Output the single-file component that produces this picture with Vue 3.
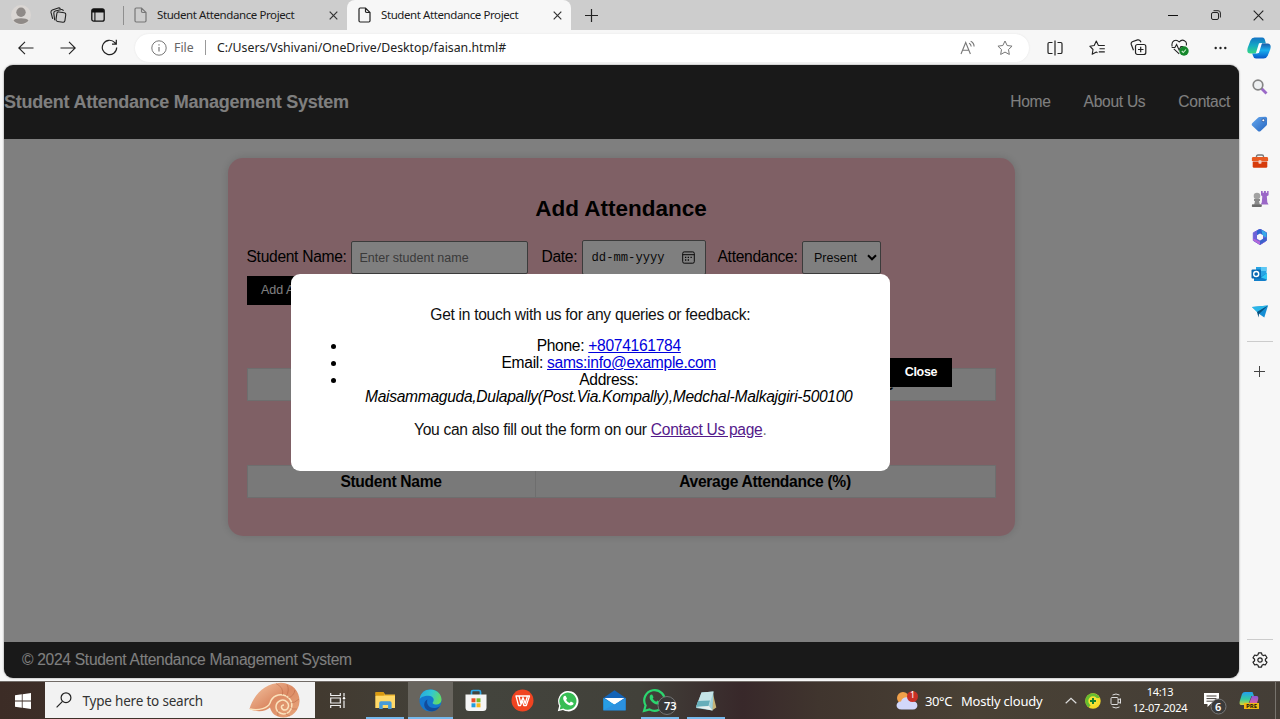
<script setup>
const navLinks = ['Home', 'About Us', 'Contact']
</script>

<template>
  <div class="desktop">
    <div class="browser">
      <div class="tabstrip">
        <div class="cell w41">
          <svg width="20" height="20" viewBox="0 0 20 20"><circle cx="10" cy="10" r="10" fill="#dad6d3"/><circle cx="10" cy="7.2" r="4.7" fill="#8f8a87"/><path d="M2.5 15.6c1.6-3 13.400-3 15 0C14.200 20.200 5.800 20.200 2.500 15.600Z" fill="#8f8a87"/></svg>
        </div>
        <div class="cell w34">
          <svg width="17" height="17" viewBox="0 0 17 17" fill="none" stroke="#222" stroke-width="1.1"><rect x="6.400" y="5.300" width="9" height="9.600" rx="1.800" transform="rotate(8 11 10)"/><path d="M4.700 13.200 3.800 6.300Q3.700 4.500 5.300 4L11.500 2.500Q13 2.300 13.400 4"/><path d="M2.700 11.800 1 5.400Q.8 3.700 2.300 3L8.200 1Q9.700.6 10.400 2"/></svg>
        </div>
        <div class="cell w45">
          <svg width="14" height="14" viewBox="0 0 14 14"><rect x=".8" y=".8" width="12.400" height="12.400" rx="2" fill="none" stroke="#111" stroke-width="1.300"/><path d="M1 4.400V2.500Q1 1 2.500 1h9Q13 1 13 2.500v1.900Z" fill="#111"/><path d="M3.900 4v9" stroke="#111" stroke-width="1.100"/></svg>
        </div>
        <div class="cell w6"><i class="tabdivider"></i></div>
        <div class="tab">
          <svg class="file" width="13" height="16" viewBox="0 0 13 16" fill="none" stroke="#777" stroke-width="1.200"><path d="M1 2.200Q1 1 2.200 1H7.500L12 5.500v8.300Q12 15 10.800 15H2.200Q1 15 1 13.800ZM7.500 1v3.300q0 1.200 1.200 1.200H12"/></svg>
          <span class="tabtitle">Student Attendance Project</span>
          <svg class="x" width="9" height="9" viewBox="0 0 9 9"><path d="m.7.700 7.600 7.600m0-7.600L.7 8.300" stroke="#333" stroke-width="1.200"/></svg>
        </div>
        <div class="tab active">
          <svg class="file" width="13" height="16" viewBox="0 0 13 16" fill="none" stroke="#222" stroke-width="1.200"><path d="M1 2.200Q1 1 2.200 1H7.500L12 5.500v8.300Q12 15 10.800 15H2.200Q1 15 1 13.800ZM7.500 1v3.300q0 1.200 1.200 1.200H12"/></svg>
          <span class="tabtitle">Student Attendance Project</span>
          <svg class="x" width="9" height="9" viewBox="0 0 9 9"><path d="m.7.700 7.600 7.600m0-7.600L.7 8.300" stroke="#333" stroke-width="1.200"/></svg>
        </div>
        <div class="cell w41"><svg width="13" height="13" viewBox="0 0 13 13"><path d="M6.500 0v13M0 6.500h13" stroke="#222" stroke-width="1.200"/></svg></div>
        <div class="winbtns">
          <div class="cell w43"><svg width="10" height="10" viewBox="0 0 10 10"><path d="M0 5.500h10" stroke="#111"/></svg></div>
          <div class="cell w43"><svg width="10" height="10" viewBox="0 0 10 10" fill="none" stroke="#222"><rect x=".5" y="2.500" width="7" height="7" rx="1.500"/><path d="M2.500.700H7Q9.400.700 9.400 3v4.500"/></svg></div>
          <div class="cell w43"><svg width="11" height="11" viewBox="0 0 11 11"><path d="m.7.700 9.600 9.600m0-9.600L.7 10.300" stroke="#222" stroke-width="1.100"/></svg></div>
        </div>
      </div>

      <div class="toolbar">
        <div class="cell w52"><svg width="16" height="14" viewBox="0 0 16 14" fill="none" stroke="#222" stroke-width="1.100"><path d="M15.500 7H1M7 .8.800 7 7 13.200"/></svg></div>
        <div class="cell w31"><svg width="16" height="14" viewBox="0 0 16 14" fill="none" stroke="#222" stroke-width="1.100"><path d="M.5 7H15M9 .8 15.200 7 9 13.200"/></svg></div>
        <div class="cell w52"><svg width="17" height="17" viewBox="0 0 17 17" fill="none" stroke="#222" stroke-width="1.200"><path d="M15.700 8.500A7.200 7.200 0 1 1 13.800 3.600L15 4.900M15.300.800v4.300H11"/></svg></div>
        <div class="address">
          <svg class="info" width="16" height="16" viewBox="0 0 16 16" fill="none" stroke="#777"><circle cx="8" cy="8" r="7.200"/><path d="M8 7v4.500M8 4.300v1.300" stroke-width="1.200"/></svg>
          <span class="scheme">File</span>
          <i class="pipe"></i>
          <span class="url">C:/Users/Vshivani/OneDrive/Desktop/faisan.html#</span>
          <svg class="read" width="16" height="16" viewBox="0 0 16 16" fill="none" stroke="#777" stroke-width="1.100"><path d="m1 14 4.700-11.500L10.400 14M2.700 10.300h6"/><path d="M9 3.300q2 .7 2.200 3.200M10.700 1.200q3.300 1.500 3.400 5.300"/></svg>
          <svg width="16" height="16" viewBox="0 0 16 16" fill="none" stroke="#777" stroke-linejoin="round"><path d="m8 1 2.150 4.500 4.900.650-3.580 3.420.88 4.880L8 12.100l-4.350 2.350.88-4.880L.95 6.150l4.900-.65Z"/></svg>
        </div>
        <div class="cell w42 split"><svg width="16" height="16" viewBox="0 0 16 16" fill="none" stroke="#222" stroke-width="1.200"><path d="M5.500 2.500H2.300Q1 2.500 1 3.800v8.400q0 1.300 1.300 1.300h3.200M10.500 2.500h3.200Q15 2.500 15 3.800v8.400q0 1.300-1.300 1.300h-3.200M8 .5v15"/></svg></div>
        <div class="cell w42"><svg width="17" height="16" viewBox="0 0 17 16" fill="none" stroke="#222" stroke-width="1.100" stroke-linejoin="round"><path d="M9.400 5.500 7.300 1 5.200 5.500.8 6.200 4 9.500l-.8 4.800 4.100-2.200 1.200.6M9.200 5.500h6.600M10.500 8.700h5.300M9.800 11.900h6"/></svg></div>
        <div class="cell w41"><svg width="17" height="17" viewBox="0 0 17 17" fill="none" stroke="#222" stroke-width="1.200"><rect x="5.500" y="5.500" width="10.300" height="10" rx="2"/><path d="M10.700 7.800v5.500M8 10.500h5.500M3.500 11.200 1.300 5.500Q.7 3.700 2.300 2.700L7.500.900Q10 .2 11 3.200"/></svg></div>
        <div class="cell w42"><svg width="18" height="17" viewBox="0 0 18 17" fill="none" stroke="#222" stroke-width="1.100"><path d="M1.200 7.500C-.2 2 5-.7 8.200 3c3.200-3.700 8.400-1 7 3.500M2.800 9.800l5.400 5M.7 8.500h3.200l1.700-3 2.500 5.400 1.800-3.400h2.500"/><circle cx="13" cy="12" r="4.700" fill="#14872b" stroke="none"/><path d="m10.800 12 1.500 1.500 2.700-3" stroke="#c9edcc"/></svg></div>
        <div class="cell w38"><svg width="13" height="4" viewBox="0 0 13 4" fill="#222"><circle cx="1.700" cy="2" r="1.200"/><circle cx="6.500" cy="2" r="1.200"/><circle cx="11.300" cy="2" r="1.200"/></svg></div>
        <div class="cell copilot"><svg width="24" height="22" viewBox="0 0 24 22"><defs><linearGradient id="cpa" x1="0" y1="0" x2="0" y2="1"><stop stop-color="#1473c4"/><stop offset=".5" stop-color="#16a9c4"/><stop offset="1" stop-color="#35d884"/></linearGradient><linearGradient id="cpb" x1="0" y1="0" x2="0" y2="1"><stop stop-color="#195aa8"/><stop offset=".45" stop-color="#19b0ee"/><stop offset="1" stop-color="#0757c8"/></linearGradient></defs><path d="M7.500.500h7.700c2 0 2.600 1.500 3 3.500l.7 2.500h-4q-1.700 0-2.300 2l-2 6q-.7 2-2.700 2H3.500C0 16.500-.1 13.700.8 10.500L3.500 3.400Q4.700.500 7.500.500Z" fill="url(#cpa)"/><path d="M16.500 21.500H9q-2.500 0-3-2.700l-.8-2.300h3q2 0 2.700-2l2-6q.6-2 2.400-2h5.200c3.300 0 3.700 3 2.700 6l-2.500 6.300q-1.100 2.700-4.200 2.700Z" fill="url(#cpb)"/><path d="m12 6.300 3-.2-2.900 9.100q-.4 1.200-3.300 1.300Z" fill="#fff"/></svg></div>
      </div>

      <div class="body">
        <div class="page">
          <header class="pagehead">
            <h1>Student Attendance Management System</h1>
            <nav><a v-for="l in navLinks" :key="l">{{ l }}</a></nav>
          </header>
          <main>
            <section class="card">
              <h2>Add Attendance</h2>
              <div class="form">
                <label class="l1">Student Name:</label>
                <div class="field name">Enter student name</div>
                <label class="l2">Date:</label>
                <div class="field date"><span>dd-mm-yyyy</span>
                  <svg width="13" height="13" viewBox="0 0 13 13" fill="none" stroke="#111"><rect x=".7" y=".9" width="11.600" height="11.300" rx="1.500"/><path d="M.7 3.700h11.600"/><path d="M5.700 6.300h1.300M8.500 6.300h1.300M3 9h1.300M5.700 9h1.300M3 6.300h1.300" stroke-width="1.300"/></svg>
                </div>
                <label class="l3">Attendance:</label>
                <div class="field sel"><span>Present</span>
                  <svg width="10" height="7" viewBox="0 0 10 7"><path d="m1 1.300 4 4 4-4" fill="none" stroke="#000" stroke-width="2"/></svg>
                </div>
              </div>
              <div class="addbtn">Add Attendance</div>
              <div class="table first"><div>Student Name</div><div>Date</div><div>Attendance</div></div>
              <div class="table second"><div>Student Name</div><div>Average Attendance (%)</div></div>
            </section>
          </main>
          <footer>© 2024 Student Attendance Management System</footer>
          <div class="overlay">
            <div class="modal">
              <p>Get in touch with us for any queries or feedback:</p>
              <ul>
                <li>Phone: <a class="k1">+8074161784</a></li>
                <li>Email: <a class="k2">sams:info@example.com</a></li>
                <li>Address:<address>Maisammaguda,Dulapally(Post.Via.Kompally),Medchal-Malkajgiri-500100</address></li>
              </ul>
              <p>You can also fill out the form on our <a class="visited">Contact Us page</a><span class="dot">.</span></p>
            </div>
            <div class="close">Close</div>
          </div>
        </div>

        <aside>
          <div class="side"><svg width="16" height="16" viewBox="0 0 16 16"><path d="m9.500 9.500 5 5" stroke="#9a69c7" stroke-width="2.800"/><circle cx="6" cy="6" r="4.800" fill="#eef0f2" stroke="#858585" stroke-width="1.700"/></svg></div>
          <div class="side"><svg width="17" height="16" viewBox="0 0 17 16"><defs><linearGradient id="tg" x1="0" y1="0" x2="1" y2="1"><stop stop-color="#66a9ee"/><stop offset="1" stop-color="#2464c0"/></linearGradient></defs><path d="M8.500 1 14.500.700q1.500 0 1.600 1.500L16 8q0 1-.8 1.700l-5.500 5.200q-1.500 1.200-2.800 0L1.300 9.700Q0 8.300 1.400 7L7 1.700Q7.600 1.100 8.500 1Z" fill="url(#tg)"/><circle cx="12.300" cy="4.300" r="1.400" fill="#fff" stroke="#234e96" stroke-width=".8"/></svg></div>
          <div class="side"><svg width="18" height="15" viewBox="0 0 18 15"><path d="M5.500 3.500v-1Q5.500 1 7 1h4q1.500 0 1.500 1.500v1" fill="none" stroke="#777" stroke-width="1.400"/><path d="M2.200 3h13.600q1.300 0 1.300 1.400V7H.9V4.400Q.9 3 2.200 3Z" fill="#e85a22"/><path d="M1.700 7.500h14.600v5q0 1.300-1.300 1.300H3q-1.300 0-1.300-1.300Z" fill="#d63b0b"/><rect x="7.500" y="6.200" width="3" height="3.600" rx=".8" fill="#f3d3c7"/></svg></div>
          <div class="side"><svg width="18" height="18" viewBox="0 0 18 18"><path d="M10 1h1.700v1.700h1.200V1h2v1.700h1.200V1h1.500v4.300l-1.800 1 .5 6 1.200 2.200H9.800l1-2.200.5-6L10 5.300Z" fill="#9b68c7"/><circle cx="6" cy="6" r="3.300" fill="#a2a2a2"/><path d="M3 9h6v2H8l.8 3.600h1.500q1 2.400-.8 2.400h-7.500q-1.700-.3-.8-2.400h2L4 11H3Z" fill="#8a8a8a"/><path d="M1.200 14.500h9.200q.9 2.500-1 2.500H2q-1.800 0-.8-2.500Z" fill="#6c6c6c"/></svg></div>
          <div class="side"><svg width="16" height="16" viewBox="0 0 16 16"><path d="M8 0 14.500 3.800v7.700L8 15.700 1.300 11.500V3.800Z" fill="#6d62d8" stroke="#6d62d8" stroke-width="1" stroke-linejoin="round"/><path d="M8 0 14.500 3.800 15 8 8.500 4.500 5 6.500V1.800Z" fill="#2f63cf"/><path d="M9.500.800 14.500 3.800V9L10.500 6.500Z" fill="#39a9e8"/><path d="M1.300 9.500 8 12.800l5 .2-5 2.700-6.700-4.200Z" fill="#b568d8"/><path d="M14.500 8v3.500L8 15.700v-4l3-2.200Z" fill="#3c62cc"/><path d="m8 4.600 3 1.700v3.500l-3 1.700-3-1.700V6.300Z" fill="#f7f7f7"/></svg></div>
          <div class="side"><svg width="17" height="16" viewBox="0 0 17 16"><path d="M5 1h10.500v12H5Z" fill="#27a4e4"/><path d="M10 1h5.500v4H10Z" fill="#5cc8f5"/><path d="M3 8.500 9.500 11 16 7v6q0 2-2 2H3Z" fill="#127fca"/><path d="M10 11.500 16 7v6.500Z" fill="#31c6f3"/><rect x=".5" y="3.500" width="9.500" height="9" rx="1" fill="#0868b2"/><circle cx="5.200" cy="8" r="2.500" fill="none" stroke="#fff" stroke-width="1.400"/></svg></div>
          <div class="side"><svg width="16" height="13" viewBox="0 0 16 13"><path d="M0 2 16 .5 12.300 12.500 8 9.500Z" fill="#168ed4"/><path d="M0 2 16 .5 5 7Z" fill="#2ab6e8"/><path d="M5 7 16 .5 7 9 6.500 12.500Z" fill="#07517f"/></svg></div>
          <i class="rule"></i>
          <div class="plus"><svg width="11" height="11" viewBox="0 0 11 11"><path d="M5.500 0v11M0 5.500h11" stroke="#444"/></svg></div>
          <i class="rule low"></i>
          <div class="gear"><svg width="16" height="16" viewBox="0 0 16 16" fill="none" stroke="#222" stroke-width="1.200" stroke-linejoin="round"><path d="M6.500.800h3l.5 2 1.300.8 2-.6 1.700 2.800L13.400 7.300v1.400l1.600 1.500-1.700 2.800-2-.6-1.300.8-.5 2h-3l-.5-2-1.300-.8-2 .6L1 10.200l1.600-1.500V7.300L1 5.800l1.700-2.800 2 .6 1.300-.8Z"/><circle cx="8" cy="8" r="2.200"/></svg></div>
        </aside>
      </div>
    </div>

    <div class="taskbar">
      <div class="cell w45"><svg width="16" height="16" viewBox="0 0 16 16" fill="#fff"><path d="M0 2.300 6.800 1.300v6.300H0ZM7.600 1.200 16 0v7.600H7.600ZM0 8.400h6.800v6.300L0 13.700ZM7.600 8.400H16V16l-8.400-1.200Z"/></svg></div>
      <div class="search">
        <svg width="16" height="16" viewBox="0 0 16 16" fill="none" stroke="#222" stroke-width="1.200"><circle cx="10" cy="5.700" r="4.900"/><path d="M6.500 9.300.6 15.300"/></svg>
        <span>Type here to search</span>
        <svg class="shell" width="51" height="36" viewBox="0 0 51 36"><defs><linearGradient id="sh" x1="0" y1="0" x2="1" y2="1"><stop stop-color="#f5c9a6"/><stop offset=".5" stop-color="#dc8b65"/><stop offset="1" stop-color="#e8a77c"/></linearGradient></defs><path d="M.5 27C4 14 15 1 32 .7 44 1 51 10 50.500 19.500 50 29 43 35.500 34.500 35.500 26 35 22.500 31 21 25.500 17 29.500 8 30.500.5 27Z" fill="url(#sh)"/><path d="M1 27C10 29 19 26 21 21c2-7 9-10 16-7 6 3 8 11 3 16-5 4-13 1-13-5 0-6 7-9 11-5 3 3 1 8-2 8-4 0-5-5-1-5" fill="none" stroke="#fbe2bc" stroke-width="1.500"/><path d="M27 1.500q8 4 6.500 11.500M38 2.500q3 6-1 12M46 8q-1 6-7 8M50 17q-4 4-9 4M48 27q-5 1-7-2M41 34q-5-1-4-4M29 34q-1-4 1-6" fill="none" stroke="#a95434" stroke-width=".7" opacity=".55"/></svg>
      </div>
      <div class="cell w46 view"><svg width="16" height="15" viewBox="0 0 16 15" fill="none" stroke="#eee" stroke-width="1.200"><path d="M.7 0v2.500h9.600V0M.7 15v-2.500h9.600V15M.7 5h9.600v5H.7ZM14 0v3.500M14 7.500V15"/><circle cx="14" cy="5.300" r="1.200" fill="#fff" stroke="none"/></svg></div>
      <div class="app w46 run"><svg width="21" height="19" viewBox="0 0 21 19"><path d="M.5 1.500h8l1.500 2H20V17H.5Z" fill="#f2bd3a"/><path d="M.5 1h8l1.300 2-1.300 1.500h-8Z" fill="#d99a10"/><path d="M.5 5H20v12H.5Z" fill="#ffd968"/><path d="M4.200 18V12q0-1.700 1.700-1.700h9q1.700 0 1.700 1.700v6h-3.500v-4H7.700v4Z" fill="#489bd9"/></svg></div>
      <div class="app w45 run current"><svg width="23" height="23" viewBox="0 0 23 23"><defs><linearGradient id="eg" x1="0" y1=".2" x2="1" y2=".5"><stop stop-color="#27a8e0"/><stop offset=".5" stop-color="#31c7d2"/><stop offset="1" stop-color="#65db63"/></linearGradient></defs><circle cx="11.500" cy="11.500" r="11" fill="#1477ce"/><path d="M.7 10C1.500 3.500 6 .5 11.500.5c7 0 11 5.500 11 10 0 4-3.700 5.500-6.500 5-2.300-.3-3-1.300-1.800-2.700 1.500-2.300-.2-5.800-4.300-6C5.500 6.500 1.500 8.500.7 10Z" fill="url(#eg)"/><path d="M8.500 10.500C7 14 9.500 20 16.500 19q3-.7 4.500-2c-3.500 6-9 6-12 4.500C3.500 18.500 4.500 12 8.500 10.500Z" fill="#124c9b"/></svg></div>
      <div class="app w46"><svg width="22" height="23" viewBox="0 0 22 23"><path d="M6.500 6V3Q6.500 1.500 8 1.500h6Q15.500 1.500 15.500 3v3" fill="none" stroke="#2da7e6" stroke-width="1.700"/><path d="M.5 5.500h21v13q0 3.500-3.500 3.500H4q-3.500 0-3.500-3.500Z" fill="#f5f5f5"/><path d="M6.500 9.300h4v4h-4Z" fill="#e94e26"/><path d="M11.500 9.300h4v4h-4Z" fill="#79b829"/><path d="M6.500 14.300h4v4h-4Z" fill="#229ddc"/><path d="M11.500 14.300h4v4h-4Z" fill="#f7b61a"/></svg></div>
      <div class="app w46"><svg width="23" height="23" viewBox="0 0 23 23"><circle cx="11.500" cy="11.500" r="11" fill="#f04421"/><path d="M5 7h13.500L15.300 16.500h-2.500L11.500 12 9.500 16.500H7.500ZM8 7l1.700 7L12 8.500l2.200 6L16.500 7" fill="none" stroke="#fff" stroke-width="1.300" stroke-linejoin="round"/></svg></div>
      <div class="app w46"><svg width="22" height="22" viewBox="0 0 22 22"><path d="M.8 21.300 2.200 15.800A10.200 10.200 0 1 1 6 19.900Z" fill="#fff"/><path d="m2.700 19.400.9-3.700A8.600 8.600 0 1 1 6.300 18.400Z" fill="#38bd55"/><path d="M6.500 6.800Q7.500 5.500 8.700 6l1.300 2.500-.9 1.400q1.300 2.200 3.500 3.100l1.300-1.400 2.600 1.300q.2 1.300-1 2.200C11 17 4.600 10.400 6.500 6.800Z" fill="#fff"/></svg></div>
      <div class="app w46"><svg width="23" height="21" viewBox="0 0 23 21"><path d="M.3 8 11.500.200 22.700 8v12.300H.3Z" fill="#1363b7"/><path d="M1.500 8h20L11.500 15Z" fill="#edf5fb"/><path d="M.3 8 13 15.500l9.700 4.800H.3Z" fill="#279de5"/><path d="M22.700 8v12.300H.3Z" fill="#2b91df"/><path d="M2.500 8h18l-8.800 6.300Z" fill="#fff"/></svg></div>
      <div class="app w46 run"><svg width="36" height="28" viewBox="0 0 36 28"><path d="m2 24 1.600-5.500A10.300 10.300 0 1 1 7.500 22.400Z" fill="none" stroke="#2bd66f" stroke-width="2.200"/><path d="M8 8.500q1-1.500 2.300-.8l1.200 2.500-.8 1.500q1.300 2 3.500 3.100l1.300-1.300 2.500 1.200q.5 1.500-1 2.500C12.500 19 6 12.500 8 8.500Z" fill="#2bd66f"/><circle cx="25" cy="18.500" r="9" fill="#383838" stroke="#747474"/></svg><b class="count">73</b></div>
      <div class="app w46 run"><svg width="22" height="22" viewBox="0 0 22 22"><path d="M18 4 21.300 17.500 17 20.500Z" fill="#c7b477"/><path d="M6.500 2.500 18.500 1.500 17.500 20.500 1 18Z" fill="#9ed1da"/><path d="M6.500 2.500 18.500 1.500 14 16 1 17Z" fill="#c6e4e7"/><path d="m3 11 12-.5-1.500 5.500L1 17Z" fill="#66aeba"/><path d="M1 17 14 16l3.500 4.500Z" fill="#e7f0ef"/></svg></div>
      <div class="tray">
        <svg width="23" height="20" viewBox="0 0 23 20"><circle cx="7" cy="7" r="6" fill="#f1a14a"/><path d="M5.500 18.500C-1 18.500-1 10.500 5 10.500 6.500 5 14 5 16 10c7 0 7 8.500 1 8.500Z" fill="#d2d7fa"/><circle cx="16.500" cy="5.500" r="5.500" fill="#c83027"/></svg>
        <b class="one">1</b>
        <span class="temp">30°C</span><span class="sky">Mostly cloudy</span>
        <svg class="chev" width="12" height="7" viewBox="0 0 12 7"><path d="m.7 6.300 5.300-5 5.300 5" fill="none" stroke="#ddd" stroke-width="1.200"/></svg>
        <svg class="guard" width="16" height="16" viewBox="0 0 16 16"><circle cx="8" cy="8" r="7.700" fill="#f6dc28"/><path d="M2 3A7.600 7.600 0 0 1 15 5.500C8 3 7 13 3.500 14.200A7.600 7.600 0 0 1 2 3Z" fill="#66bd31"/><circle cx="8" cy="8" r="4.700" fill="#f7e335"/><path d="M8 5v6M5 8h6" stroke="#17802f" stroke-width="2"/></svg>
        <svg class="cam" width="12" height="16" viewBox="0 0 12 16" fill="none" stroke="#ddd"><rect x="1" y="4.500" width="7" height="7" rx="1"/><path d="M8 7 10.500 5.700v4.600L8 9M2.500 2Q6 0 9.500 2M2.500 14Q6 16 9.500 14"/></svg>
        <div class="clock"><span>14:13</span><span class="day">12-07-2024</span></div>
        <div class="note"><svg width="24" height="24" viewBox="0 0 24 24"><path d="M1 2h15v11H7.500L4.500 16v-3H1Z" fill="#fff"/><path d="M3.500 5h10M3.500 7.600h10M3.500 10.200h7" stroke="#48433d"/><circle cx="15.500" cy="15.500" r="7.500" fill="#3b3b3b" stroke="#777"/></svg><b>6</b></div>
        <div class="pre"><svg width="21" height="20" viewBox="0 0 21 20"><defs><linearGradient id="pa" x1="0" y1="0" x2="0" y2="1"><stop stop-color="#229ff0"/><stop offset=".55" stop-color="#35c9a0"/><stop offset="1" stop-color="#dcd735"/></linearGradient><linearGradient id="pb" x1="0" y1="0" x2="0" y2="1"><stop stop-color="#8b57dc"/><stop offset="1" stop-color="#f26487"/></linearGradient></defs><path d="M6 1h7.500L15 5h-2.500L9 14H2Q0 14 .8 10L3 3Q3.700 1 6 1Z" fill="url(#pa)"/><path d="M13 5h4.500Q20 5 19 9l-2 6H9Z" fill="url(#pb)"/></svg><b>PRE</b></div>
        <i class="peek"></i>
      </div>
    </div>
  </div>
</template>

<style>
html, body { margin: 0; overflow: hidden; }
</style>

<style scoped>
* { box-sizing: border-box; }
svg { display: block; flex: none; }
.desktop { width: 1280px; height: 719px; display: flex; flex-direction: column; font-family: "Noto Sans", sans-serif; overflow: hidden; }
.browser { height: 681px; flex: none; display: flex; flex-direction: column; background: #f7f7f7; }
.cell { height: 100%; display: flex; align-items: center; justify-content: center; flex: none; }
.w6 { width: 6px; } .w31 { width: 31px; } .w34 { width: 34px; } .w38 { width: 38px; } .w41 { width: 41px; } .w42 { width: 42px; } .w43 { width: 43px; } .w45 { width: 45px; } .w46 { width: 46px; } .w52 { width: 52px; }
.tabstrip { height: 30px; flex: none; display: flex; background: #cdcdcd; }
.tabdivider { width: 1px; height: 19px; background: #8f8f8f; }
.tab { width: 221px; height: 30px; display: flex; align-items: center; padding: 0 9px 0 8px; flex: none; white-space: nowrap; }
.tab.active { width: 224px; background: #f7f7f7; border-radius: 8px 8px 0 0; padding-left: 11px; }
.tabtitle { font-size: 11.5px; letter-spacing: -.41px; color: #1c1c1c; margin-left: 10px; flex: 1; padding-bottom: 1px; }
.winbtns { margin-left: auto; display: flex; }
.toolbar { height: 35px; flex: none; display: flex; align-items: center; }
.address { width: 894px; height: 28px; border-radius: 14px; background: #fff; display: flex; align-items: center; padding: 0 16px; font-size: 12.3px; white-space: nowrap; flex: none; box-shadow: 0 0 2px #e3e3e3; }
.scheme { color: #666; margin-left: 7px; width: 31px; }
.pipe { width: 1px; height: 15px; background: #999; margin-right: 11px; }
.url { color: #222; flex: 1; letter-spacing: -.01px; }
.read { margin-right: 21px; }
.split { margin-left: 5px; }
.copilot { width: 40px; }
.body { flex: 1; display: flex; min-height: 0; }
.page { position: relative; width: 1235px; height: 613px; margin: 0 0 0 4px; border-radius: 9px; overflow: hidden; display: flex; flex-direction: column; background: #fff; font-family: "Liberation Sans", Arial, sans-serif; font-size: 15.6px; letter-spacing: -.3px; flex: none; box-shadow: 0 0 2px #777; }
.pagehead { height: 74px; background: #333; color: #fff; display: flex; align-items: center; justify-content: space-between; padding-right: 9px; flex: none; }
h1 { margin: 0; font-size: 18px; letter-spacing: -.24px; white-space: nowrap; }
nav { display: flex; gap: 33px; }
main { flex: 1; padding-top: 19px; }
.card { width: 787px; height: 378px; margin-left: 224px; border-radius: 15px; background: #ffc0cb; padding: 37px 19.500px 0 18.500px; box-shadow: 0 0 10px rgba(0, 0, 0, .15); }
h2 { margin: 0; font-size: 22.5px; letter-spacing: 0; line-height: 28px; text-align: center; }
.form { display: flex; align-items: flex-start; margin-top: 17px; height: 36px; white-space: nowrap; }
.form label { line-height: 33px; }
.l1 { width: 104px; } .l2 { width: 40px; margin-left: 14px; } .l3 { width: 84.500px; margin-left: 12px; }
.field { height: 33px; border: 1px solid #767676; border-radius: 2px; background: #fff; display: flex; align-items: center; font-size: 12.5px; letter-spacing: 0; margin-top: 1px; color: #111; }
.name { width: 177px; padding-left: 8px; color: #757575; }
.date { width: 124px; height: 35px; margin-top: 0; padding: 0 10px 0 9px; justify-content: space-between; font-family: "Liberation Mono", monospace; font-size: 12.2px; }
.sel { width: 79px; padding: 0 3px 0 11px; justify-content: space-between; }
.addbtn { width: 119px; height: 29px; background: #000; color: #fff; font-size: 12.5px; letter-spacing: 0; line-height: 29px; padding-left: 14.500px; white-space: nowrap; }
.table { display: grid; border: 1px solid #ddd; background: #f2f2f2; height: 33px; font-weight: bold; line-height: 31px; text-align: center; }
.table div + div { border-left: 1px solid #ddd; }
.first { grid-template-columns: 240px 1fr 285px; margin-top: 63px; }
.second { grid-template-columns: 287px 1fr; margin-top: 64px; }
footer { height: 36px; background: #333; color: #fff; line-height: 36px; padding-left: 18px; flex: none; }
.overlay { position: absolute; inset: 0; background: rgba(0, 0, 0, .5); }
.modal { position: absolute; left: 286.500px; top: 208.500px; width: 599.500px; height: 197.500px; border-radius: 9px; background: #fff; padding: 32px 19px 0; text-align: center; line-height: 17px; color: #111; white-space: nowrap; }
.modal p { margin: 0; }
.modal ul { margin: 15.500px 0 15px; padding: 0 0 0 37px; line-height: 16.900px; color: #000; }
.modal a { color: #00d; text-decoration: underline; }
.modal a.visited { color: #551a8b; }
.modal .dot { color: #777; }
.close { position: absolute; left: 886px; top: 293px; width: 62px; height: 29px; background: #000; color: #fff; font-weight: bold; font-size: 12.500px; letter-spacing: -.3px; line-height: 28px; text-align: center; }
aside { flex: 1; display: flex; flex-direction: column; align-items: center; padding-top: 3px; }
.side { height: 37.500px; display: flex; align-items: center; justify-content: center; flex: none; }
.rule { width: 26px; height: 1px; background: #ccc; flex: none; margin-top: 10px; }
.plus { height: 60px; display: flex; align-items: center; }
.rule.low { margin-top: 238px; }
.gear { height: 42px; display: flex; align-items: center; }
.taskbar { height: 38px; flex: none; display: flex; background: linear-gradient(90deg, #3c2c26 0, #423a30 25%, #43443d 38%, #42413a 50%, #38282a 58%, #40352e 64%, #494135 76%, #443e37 100%); border-top: 1px solid #716b67; color: #fff; }
.search { width: 269.500px; height: 36px; background: #f2f2f2; display: flex; align-items: center; padding-left: 11px; color: #333; font-size: 13.500px; white-space: nowrap; flex: none; }
.search span { margin-left: 10.500px; flex: 1; letter-spacing: -.2px; padding-top: 1px; }
.shell { margin-right: 15px; }
.view { margin-right: 1.500px; }
.app { height: 37px; display: flex; align-items: center; justify-content: center; flex: none; position: relative; }
.app.run::after { content: ""; position: absolute; bottom: 0; left: 4px; right: 4px; height: 2px; background: #76b9ed; }
.app.current { background: #68655e; }
.app.current::after { left: 0; right: 0; }
.count { position: absolute; left: 27px; top: 15px; font-size: 11px; line-height: 18px; font-weight: 600; }
.tray { margin-left: auto; display: flex; align-items: center; height: 37px; position: relative; font-size: 13px; white-space: nowrap; width: 384px; flex: none; }
.one { position: absolute; left: 14px; top: 7px; font: 9px/12px "Noto Sans", sans-serif; }
.temp { width: 36px; margin-left: 6px; letter-spacing: -.4px; }
.sky { width: 104px; letter-spacing: -.2px; }
.chev { margin-right: 8px; }
.guard { margin-right: 9px; }
.cam { margin-right: 9px; }
.clock { width: 58px; display: flex; flex-direction: column; align-items: center; font-size: 11px; line-height: 16px; letter-spacing: -.3px; padding-bottom: 2px; }
.note { position: relative; margin-left: 14px; padding-top: 5px; }
.note b { position: absolute; left: 12px; top: 12px; font: 600 11px/17px "Noto Sans", sans-serif; }
.pre { position: relative; margin-left: 12px; }
.pre b { position: absolute; left: 5px; top: 12px; width: 15px; height: 6px; background: #f2b911; color: #111; font-size: 6px; line-height: 6px; text-align: center; }
.peek { width: 1px; height: 37px; background: #77736d; margin-left: auto; margin-right: 4px; }
</style>
